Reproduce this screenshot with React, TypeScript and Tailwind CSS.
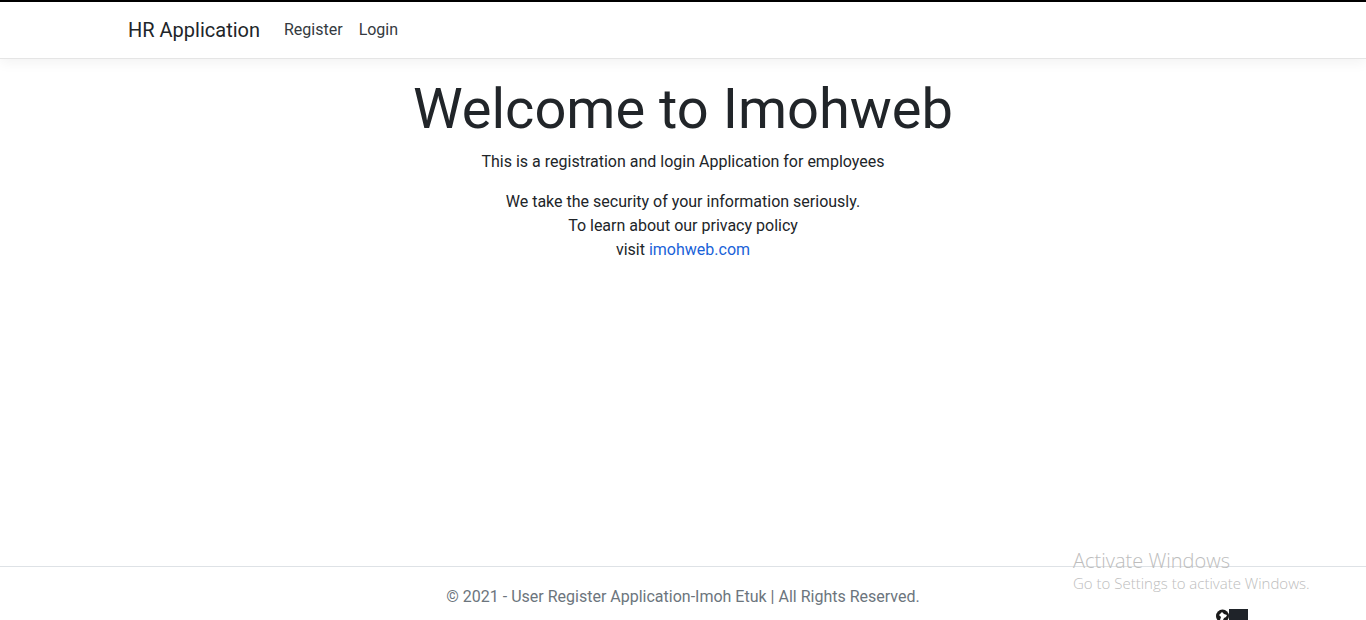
const App = () => {
  return (
    <div className="relative flex h-[620px] flex-col overflow-hidden bg-white font-['Roboto',sans-serif] text-[#212529]">
      <div className="h-[2px] bg-black"></div>
      <nav className="h-[57px] border-b border-[#e5e5e5] bg-white shadow-[0_4px_12px_rgba(0,0,0,0.05)]">
        <div className="mx-auto flex h-full w-[1140px] items-center px-[15px]">
          <a className="mr-4 text-[20px] leading-[30px] text-[#212529]">HR Application</a>
          <ul className="flex">
            <li className="px-2 text-base leading-6 text-[#343a40]">Register</li>
            <li className="px-2 text-base leading-6 text-[#343a40]">Login</li>
          </ul>
        </div>
      </nav>
      <main className="flex flex-1 flex-col items-center text-center text-base leading-6">
        <h1 className="mt-[17px] mb-[7px] text-[56px] leading-[67px] font-normal">Welcome to Imohweb</h1>
        <p className="mb-4">This is a registration and login Application for employees</p>
        <p>
          We take the security of your information seriously.
          <br />
          To learn about our privacy policy
          <br />
          visit <a className="text-[#1a62d8]">imohweb.com</a>
        </p>
      </main>
      <footer className="h-[54px] border-t border-[#dee2e6] pt-[18px] text-center text-base leading-6 text-[#6c757d]">
        © 2021 - User Register Application-Imoh Etuk | All Rights Reserved.
      </footer>

      {/* windows watermark sits over the footer */}
      <div className="absolute top-[548px] left-[1073px] font-['Open_Sans',sans-serif] font-light text-[#bdbdbd]">
        <div className="text-[20px] leading-[25px]">Activate Windows</div>
        <div className="text-[15px] leading-[21px]">Go to Settings to activate Windows.</div>
      </div>
      <svg className="absolute top-[609px] left-[1216px]" width="32" height="11" viewBox="0 0 32 11">
        <rect x="13" y="0" width="19" height="11" fill="#1f2329" />
        <circle cx="6.5" cy="7" r="6.5" fill="#1a1a1a" />
        <path d="M3 6l3-3 2 2 3 1-1 2-2 1-1 2H4l1-3z" fill="#fff" />
      </svg>
    </div>
  )
}

export default App
